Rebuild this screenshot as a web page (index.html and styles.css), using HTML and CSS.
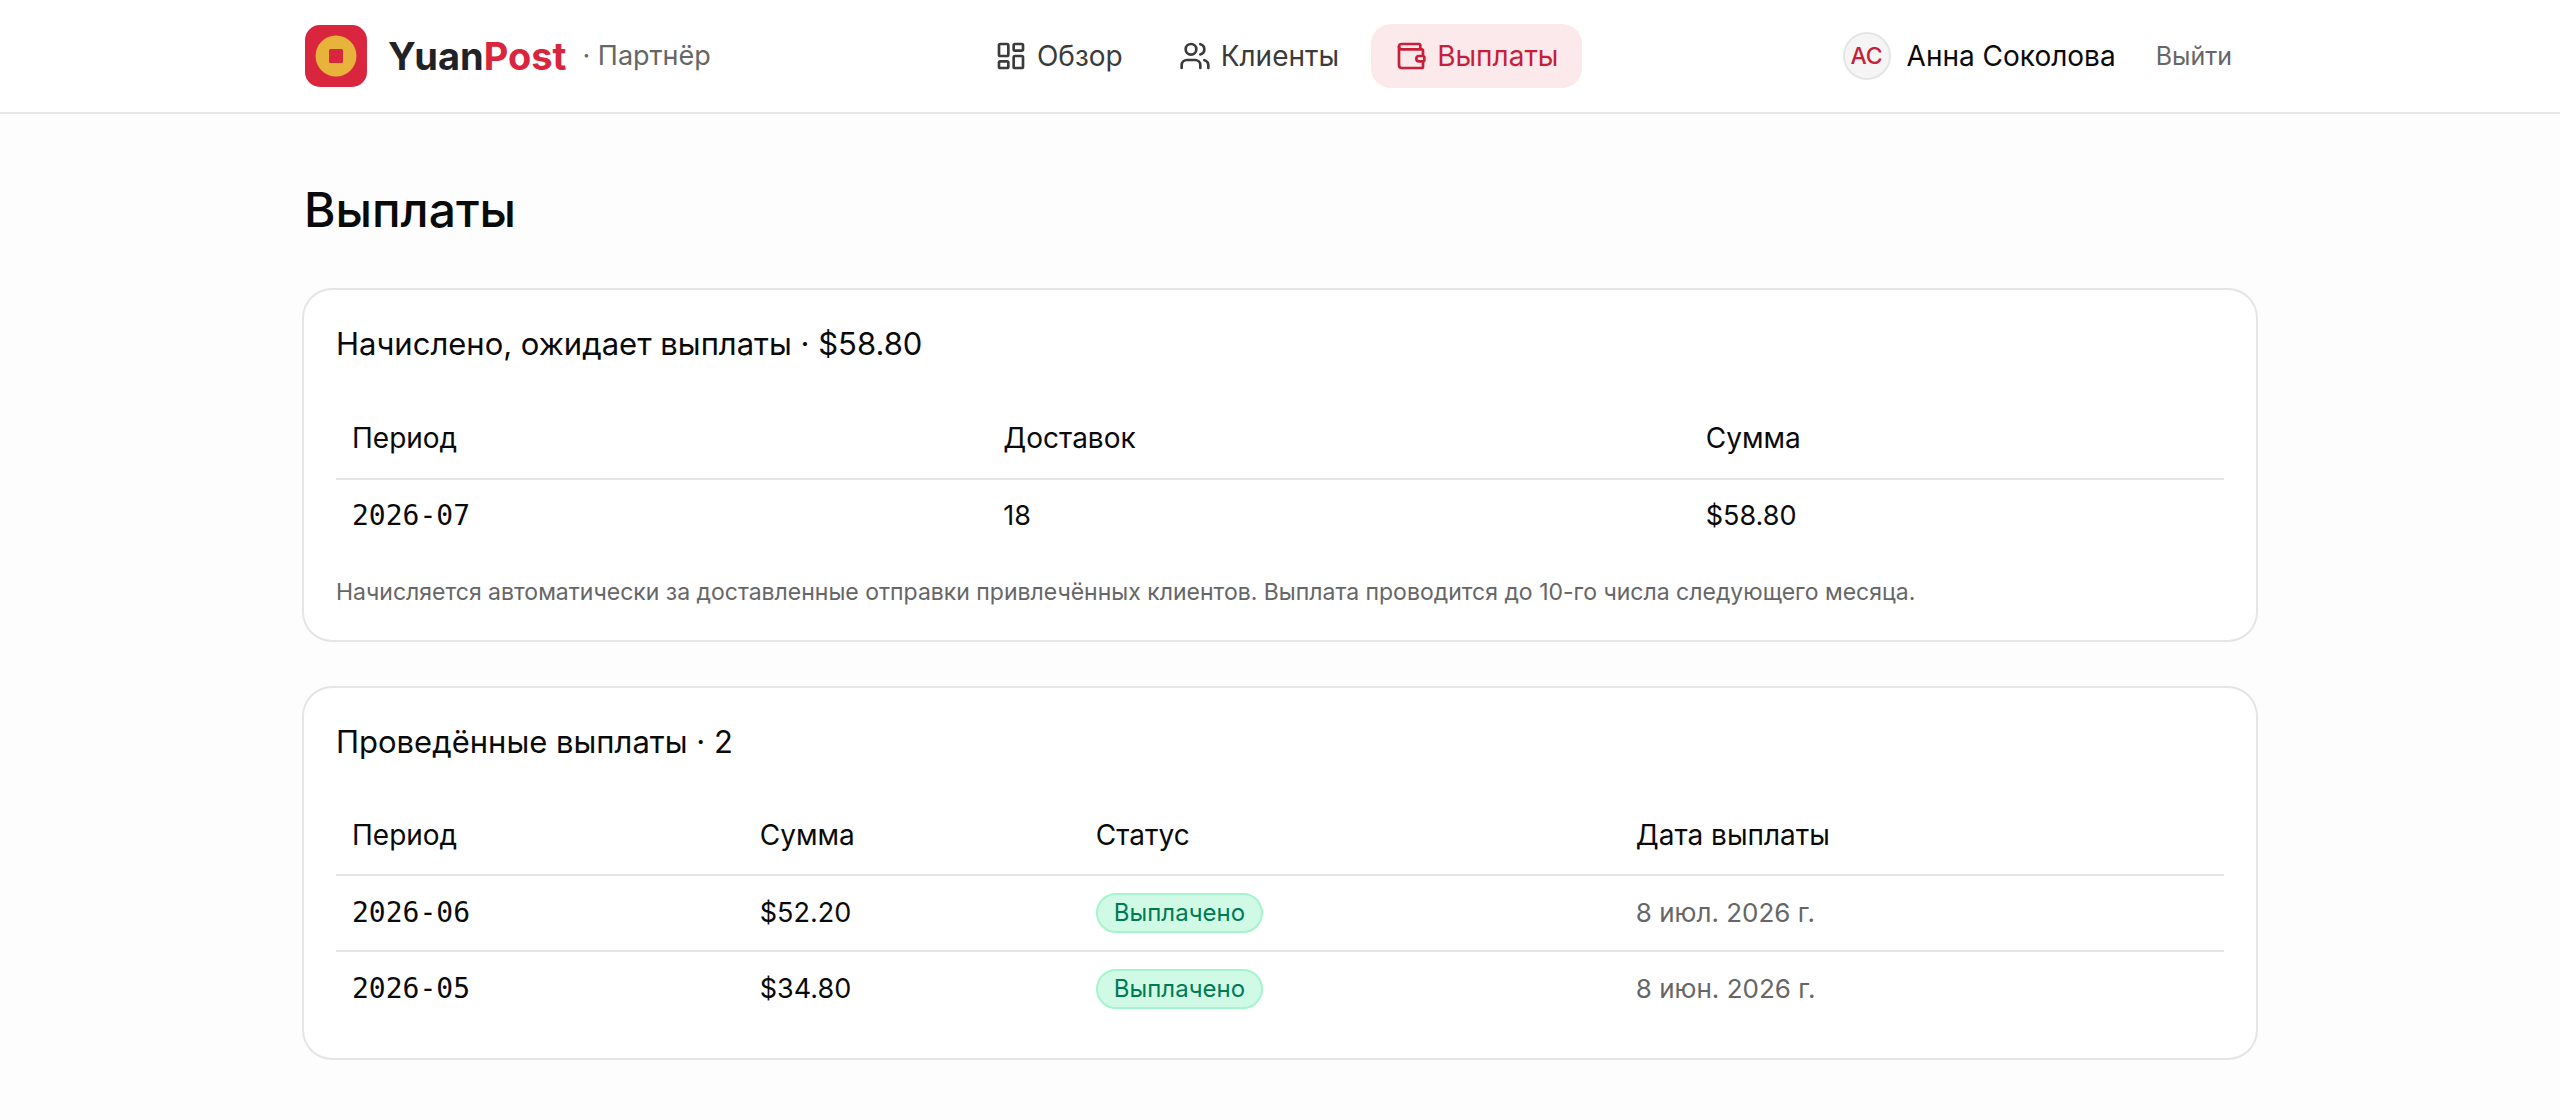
FILE: index.html
```html
<!DOCTYPE html>
<html lang="ru">
<head>
    <meta charset="UTF-8">
    <meta name="viewport" content="width=device-width, initial-scale=1.0">
    <title>YuanPost - Выплаты</title>
    <link rel="stylesheet" href="styles.css">
</head>
<body>

    <!-- Header -->
    <header class="header">
        <div class="header-inner">
            <a class="brand" href="#">
                <svg class="brand-logo" viewBox="0 0 64 64" aria-hidden="true">
                    <rect x="1" y="1" width="62" height="62" rx="15" fill="#d9263e"/>
                    <circle cx="32" cy="32" r="20.5" fill="#e8b33a"/>
                    <rect x="25" y="25" width="14" height="14" rx="1.5" fill="#d9263e"/>
                </svg>
                <span class="brand-name">Yuan<span class="brand-accent">Post</span></span>
                <span class="brand-role">· Партнёр</span>
            </a>

            <nav class="nav">
                <a class="nav-link" href="#">
                    <svg class="icon" viewBox="0 0 24 24" aria-hidden="true">
                        <rect x="3" y="3" width="7" height="9" rx="1"/>
                        <rect x="14" y="3" width="7" height="5" rx="1"/>
                        <rect x="14" y="12" width="7" height="9" rx="1"/>
                        <rect x="3" y="16" width="7" height="5" rx="1"/>
                    </svg>
                    <span>Обзор</span>
                </a>
                <a class="nav-link" href="#">
                    <svg class="icon" viewBox="0 0 24 24" aria-hidden="true">
                        <path d="M16 21v-2a4 4 0 0 0-4-4H6a4 4 0 0 0-4 4v2"/>
                        <path d="M16 3.128a4 4 0 0 1 0 7.744"/>
                        <path d="M22 21v-2a4 4 0 0 0-3-3.87"/>
                        <circle cx="9" cy="7" r="4"/>
                    </svg>
                    <span>Клиенты</span>
                </a>
                <a class="nav-link active" href="#" aria-current="page">
                    <svg class="icon" viewBox="0 0 24 24" aria-hidden="true">
                        <path d="M19 7V4a1 1 0 0 0-1-1H5a2 2 0 0 0 0 4h15a1 1 0 0 1 1 1v4h-3a2 2 0 0 0 0 4h3a1 1 0 0 0 1-1v-2a1 1 0 0 0-1-1"/>
                        <path d="M3 5v14a2 2 0 0 0 2 2h15a1 1 0 0 0 1-1v-4"/>
                    </svg>
                    <span>Выплаты</span>
                </a>
            </nav>

            <div class="user">
                <span class="avatar">АС</span>
                <span class="user-name">Анна Соколова</span>
                <button class="logout" type="button">Выйти</button>
            </div>
        </div>
    </header>

    <main class="main">
        <h1>Выплаты</h1>

        <!-- Pending -->
        <section class="card">
            <h2>Начислено, ожидает выплаты · $58.80</h2>
            <table class="pending-table">
                <thead>
                    <tr><th>Период</th><th>Доставок</th><th>Сумма</th></tr>
                </thead>
                <tbody>
                    <tr><td class="period">2026-07</td><td>18</td><td>$58.80</td></tr>
                </tbody>
            </table>
            <p class="note">Начисляется автоматически за доставленные отправки привлечённых клиентов. Выплата проводится до 10-го числа следующего месяца.</p>
        </section>

        <!-- Paid -->
        <section class="card">
            <h2>Проведённые выплаты · 2</h2>
            <table class="paid-table">
                <thead>
                    <tr><th>Период</th><th>Сумма</th><th>Статус</th><th>Дата выплаты</th></tr>
                </thead>
                <tbody>
                    <tr>
                        <td class="period">2026-06</td>
                        <td>$52.20</td>
                        <td><span class="badge">Выплачено</span></td>
                        <td class="date">8 июл. 2026 г.</td>
                    </tr>
                    <tr>
                        <td class="period">2026-05</td>
                        <td>$34.80</td>
                        <td><span class="badge">Выплачено</span></td>
                        <td class="date">8 июн. 2026 г.</td>
                    </tr>
                </tbody>
            </table>
        </section>
    </main>

</body>
</html>
```

FILE: styles.css
```css
* {
    box-sizing: border-box;
}
body {
    margin: 0;
    font-family: Inter, "Noto Sans", sans-serif;
    font-size: 27px;
    line-height: 40px;
    color: #0a0a0a;
    background-color: #fdfdfd;
}
a {
    color: inherit;
    text-decoration: none;
}

/* Header */
.header {
    background-color: #fff;
    border-bottom: 2px solid #e5e5e5;
}
.header-inner {
    display: flex;
    align-items: center;
    justify-content: space-between;
    max-width: 2048px;
    min-height: 112px;
    margin: 0 auto;
    padding: 0 48px;
}
.brand {
    display: flex;
    align-items: center;
}
.brand-logo {
    width: 64px;
    height: 64px;
    margin-right: 20px;
}
.brand-name {
    font-size: 38px;
    font-weight: 700;
    color: #1f2226;
}
.brand-accent {
    color: #d9263e;
}
.brand-role {
    margin-left: 16px;
    color: #666;
}
.nav {
    display: flex;
    gap: 8px;
}
.nav-link {
    display: flex;
    align-items: center;
    gap: 10px;
    padding: 12px 24px;
    border-radius: 20px;
    font-size: 28px;
    color: #3b3b3b;
}
.nav-link.active {
    color: #c81e37;
    background-color: #fbe9eb;
}
.icon {
    width: 32px;
    height: 32px;
    fill: none;
    stroke: currentColor;
    stroke-width: 2;
    stroke-linecap: round;
    stroke-linejoin: round;
}
.user {
    display: flex;
    align-items: center;
    gap: 16px;
}
.avatar {
    display: flex;
    align-items: center;
    justify-content: center;
    width: 48px;
    height: 48px;
    border: 2px solid #e5e5e5;
    border-radius: 50%;
    font-size: 23px;
    font-weight: 500;
    color: #c81e37;
    background-color: #f5f5f5;
}
.user-name {
    font-size: 28px;
}
.logout {
    padding: 12px 24px;
    border: none;
    font: inherit;
    font-size: 25px;
    color: #666;
    background: none;
    cursor: pointer;
}

/* Content */
.main {
    display: flex;
    flex-direction: column;
    gap: 48px;
    max-width: 2048px;
    margin: 0 auto;
    padding: 64px 48px 48px;
}
h1 {
    margin: 0;
    font-size: 48px;
    line-height: 64px;
    font-weight: 500;
}
.card {
    padding: 32px;
    border-radius: 28px;
    background-color: #fff;
    box-shadow: 0 0 0 2px #e5e5e5;
}
.card h2 {
    margin: 0 0 32px;
    font-size: 31px;
    line-height: 44px;
    font-weight: 400;
}
table {
    width: 100%;
    table-layout: fixed;
    border-collapse: separate;
    border-spacing: 0;
}
th,
td {
    padding: 0 16px;
    text-align: left;
}
th {
    height: 82px;
    border-bottom: 2px solid #e5e5e5;
    font-size: 28px;
    font-weight: 400;
}
td {
    height: 72px;
}
.pending-table th:nth-child(1) {
    width: 34.5%;
}
.pending-table th:nth-child(2) {
    width: 37.2%;
}
.paid-table th:nth-child(1) {
    width: 21.6%;
}
.paid-table th:nth-child(2) {
    width: 17.8%;
}
.paid-table th:nth-child(3) {
    width: 28.6%;
}
.paid-table th {
    height: 80px;
}
.paid-table td {
    height: 74px;
}
.paid-table tr:not(:last-child) td {
    height: 76px;
    border-bottom: 2px solid #e5e5e5;
}
.period {
    font-family: "DejaVu Sans Mono", monospace;
    font-size: 28px;
}
.date {
    font-size: 26px;
    color: #666;
}
.badge {
    display: flex;
    align-items: center;
    width: fit-content;
    height: 40px;
    padding: 0 16px;
    border: 2px solid #a4f4cf;
    border-radius: 20px;
    font-size: 24px;
    color: #007a55;
    background-color: #d0fae5;
}
.note {
    margin: 24px 0 0;
    font-size: 23px;
    line-height: 32px;
    color: #666;
}
```
